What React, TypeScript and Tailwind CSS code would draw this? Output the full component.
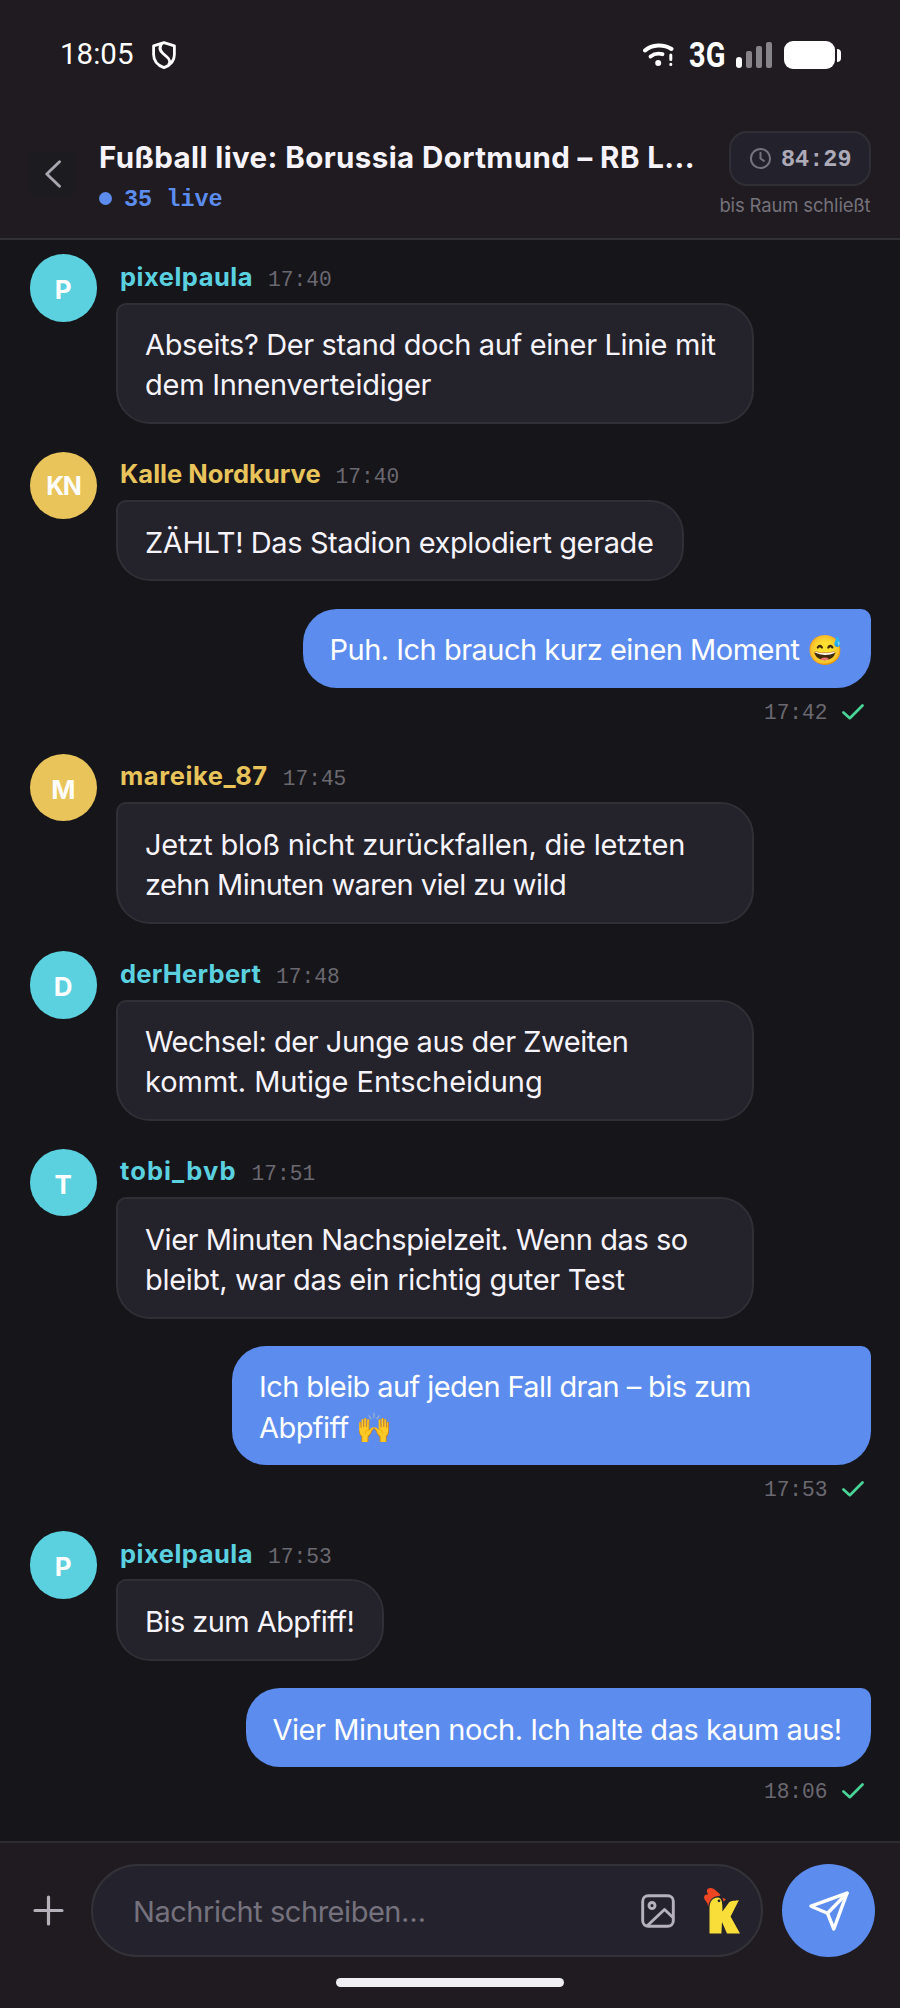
import { clsx } from 'clsx';

type Line = { text: string; tracking: string };

type Message = {
  id: number;
  author?: string;
  authorTracking?: string;
  initials?: string;
  tone?: 'cyan' | 'gold';
  time: string;
  lines: Line[];
  width: string;
};

const MESSAGES: Message[] = [
  {
    id: 1,
    author: 'pixelpaula',
    authorTracking: 'tracking-[0.5px]',
    initials: 'P',
    tone: 'cyan',
    time: '17:40',
    lines: [
      { text: 'Abseits? Der stand doch auf einer Linie mit', tracking: 'tracking-[-0.37px]' },
      { text: 'dem Innenverteidiger', tracking: 'tracking-[-0.26px]' },
    ],
    width: 'w-[637.5px]',
  },
  {
    id: 2,
    author: 'Kalle Nordkurve',
    authorTracking: 'tracking-normal',
    initials: 'KN',
    tone: 'gold',
    time: '17:40',
    lines: [{ text: 'ZÄHLT! Das Stadion explodiert gerade', tracking: 'tracking-[-0.4px]' }],
    width: 'w-[567.5px]',
  },
  {
    id: 3,
    time: '17:42',
    lines: [{ text: 'Puh. Ich brauch kurz einen Moment 😅', tracking: 'tracking-[-0.51px]' }],
    width: 'w-[568px]',
  },
  {
    id: 4,
    author: 'mareike_87',
    authorTracking: 'tracking-[0.6px]',
    initials: 'M',
    tone: 'gold',
    time: '17:45',
    lines: [
      { text: 'Jetzt bloß nicht zurückfallen, die letzten', tracking: 'tracking-[-0.18px]' },
      { text: 'zehn Minuten waren viel zu wild', tracking: 'tracking-[-0.57px]' },
    ],
    width: 'w-[637.5px]',
  },
  {
    id: 5,
    author: 'derHerbert',
    authorTracking: 'tracking-[0.25px]',
    initials: 'D',
    tone: 'cyan',
    time: '17:48',
    lines: [
      { text: 'Wechsel: der Junge aus der Zweiten', tracking: 'tracking-[-0.49px]' },
      { text: 'kommt. Mutige Entscheidung', tracking: 'tracking-[-0.04px]' },
    ],
    width: 'w-[637.5px]',
  },
  {
    id: 6,
    author: 'tobi_bvb',
    authorTracking: 'tracking-[1.1px]',
    initials: 'T',
    tone: 'cyan',
    time: '17:51',
    lines: [
      { text: 'Vier Minuten Nachspielzeit. Wenn das so', tracking: 'tracking-[-0.44px]' },
      { text: 'bleibt, war das ein richtig guter Test', tracking: 'tracking-[-0.3px]' },
    ],
    width: 'w-[637.5px]',
  },
  {
    id: 7,
    time: '17:53',
    lines: [
      { text: 'Ich bleib auf jeden Fall dran – bis zum', tracking: 'tracking-[-0.6px]' },
      { text: 'Abpfiff 🙌', tracking: 'tracking-[-0.55px]' },
    ],
    width: 'w-[638.5px]',
  },
  {
    id: 8,
    author: 'pixelpaula',
    authorTracking: 'tracking-[0.5px]',
    initials: 'P',
    tone: 'cyan',
    time: '17:53',
    lines: [{ text: 'Bis zum Abpfiff!', tracking: 'tracking-[-0.56px]' }],
    width: 'w-[268px]',
  },
  {
    id: 9,
    time: '18:06',
    lines: [{ text: 'Vier Minuten noch. Ich halte das kaum aus!', tracking: 'tracking-[-0.47px]' }],
    width: 'w-[625px]',
  },
];

function StatusBar() {
  return (
    <div className="flex h-[110px] items-center pl-[60px] pr-[59px] text-white">
      <span className="font-['Roboto',sans-serif] text-[29.5px] leading-none">18:05</span>
      <svg viewBox="0 0 24 28" className="ml-[19px] h-[28px] w-[24px]" fill="none" stroke="currentColor" strokeWidth="2.8" strokeLinejoin="round">
        <path d="M12 1.6 L22.4 4.8 V13.5 C22.4 20 18 24.5 12 26.6 C6 24.5 1.6 20 1.6 13.5 V4.8 Z" />
        <path d="M10 2.4 C7 6 7.5 9.5 11 12.5 L15 16 C18 18.6 18.5 20.5 16.6 23.8" />
      </svg>
      <div className="ml-auto flex items-center">
        <svg viewBox="0 0 31 24" className="h-[24px] w-[31px]" fill="none" stroke="currentColor" strokeLinecap="round">
          <path d="M2 7.5 C9 1 21 1 28.5 6" strokeWidth="4" />
          <path d="M7.5 13.5 C11 10.8 15 10 19.5 11.2" strokeWidth="3.8" />
          <circle cx="15.2" cy="20" r="3" fill="currentColor" stroke="none" />
          <path d="M27.8 12 V16.5 M27.8 21.2 V21.4" strokeWidth="3" />
        </svg>
        <span className="ml-[15px] inline-block w-[38px] origin-left scale-x-[0.84] font-['Roboto',sans-serif] text-[34.5px] font-bold leading-none">
          3G
        </span>
        <div className="ml-[9px] flex h-[26px] items-end gap-[4px]">
          <i className="h-[11px] w-[6px] rounded-full bg-white" />
          <i className="h-[17px] w-[6px] rounded-[2px] bg-[#868488]" />
          <i className="h-[22px] w-[6px] rounded-[2px] bg-[#868488]" />
          <i className="h-[26px] w-[6px] rounded-[2px] bg-[#868488]" />
        </div>
        <span className="ml-[12px] h-[28px] w-[51px] rounded-[9px] bg-white" />
        <span className="ml-[2px] h-[13px] w-[4px] rounded-r-[4px] bg-white" />
      </div>
    </div>
  );
}

function Header() {
  return (
    <header className="h-[240px] border-b-2 border-[#303035] bg-[#1f1b20]">
      <StatusBar />
      <div className="flex pl-[29px] pr-[29.5px]">
        <div className="mt-[41px] flex h-[46px] w-[46px] items-center justify-center rounded-[10px] bg-[#1c1b20]">
          <svg viewBox="0 0 16 28" className="ml-[1.5px] h-[28px] w-[16px]" fill="none" stroke="#a9a6af" strokeWidth="2.9" strokeLinecap="round" strokeLinejoin="round">
            <path d="M14.5 1.8 L1.8 14 L14.5 26.2" />
          </svg>
        </div>
        <div className="ml-[24px] mt-[27px] w-[600px]">
          <h1 className="h-[40px] whitespace-nowrap text-[29.5px] font-bold leading-[40px] tracking-[0.4px] text-[#f6f4fa]">
            Fußball live: Borussia Dortmund – RB L...
          </h1>
          <div className="mt-[6px] flex h-[30px] items-center">
            <span className="h-[13px] w-[13px] rounded-full bg-[#5b8cee]" />
            <span className="ml-[12px] pt-[4px] font-['Liberation_Mono',monospace] text-[23.5px] font-bold leading-[30px] text-[#5b8cee]">
              35 live
            </span>
          </div>
        </div>
        <div className="ml-auto flex flex-col items-end">
          <div className="mt-[21px] flex h-[55px] w-[142px] items-center rounded-[18px] border-2 border-[#302f36] bg-[#23222c] pl-[18px]">
            <svg viewBox="0 0 24 24" className="h-[23px] w-[23px]" fill="none" stroke="#75727d" strokeWidth="2.1" strokeLinecap="round" strokeLinejoin="round">
              <circle cx="12" cy="12" r="10" />
              <path d="M12 6 V12 L15.5 14.5" />
            </svg>
            <span className="ml-[9.5px] pt-[3px] font-['Liberation_Mono',monospace] text-[23.5px] font-bold text-[#aeabb8]">
              84:29
            </span>
          </div>
          <p className="mt-[6px] whitespace-nowrap text-[18.5px] leading-[26px] tracking-[-0.16px] text-[#75727b]">
            bis Raum schließt
          </p>
        </div>
      </div>
    </header>
  );
}

function Bubble({ message }: { message: Message }) {
  const own = !message.author;
  return (
    <div
      className={clsx(
        'whitespace-nowrap text-[29px] leading-[40.1px]',
        message.width,
        own
          ? 'rounded-[34px] rounded-tr-[10px] bg-[#5b8cee] px-[27px] pb-[17.1px] pt-[21.1px] text-white'
          : 'rounded-[34px] rounded-tl-[10px] border-2 border-[#302f36] bg-[#24222b] px-[27px] pb-[16.6px] pt-[20.6px] text-[#f6f4fa]',
      )}
    >
      {message.lines.map((line) => (
        <p key={line.text} className={clsx('h-[40.1px]', line.tracking)}>
          {line.text}
        </p>
      ))}
    </div>
  );
}

function IncomingMessage({ message }: { message: Message }) {
  return (
    <div className="flex">
      <div
        className={clsx(
          'flex h-[67.5px] w-[67.5px] shrink-0 items-center justify-center rounded-full pt-[3px] font-bold text-white',
          message.initials === 'KN' ? 'text-[25px] tracking-[-1.6px]' : 'text-[26px]',
          message.tone === 'cyan' ? 'bg-[#5bd1e0]' : 'bg-[#e8c45b]',
        )}
      >
        {message.initials}
      </div>
      <div className="ml-[19px]">
        <div className="flex h-[48.3px] items-baseline pl-[4px] pt-[4.5px]">
          <span
            className={clsx(
              'text-[25.5px] font-bold leading-[36px]',
              message.authorTracking,
              message.tone === 'cyan' ? 'text-[#5bd1e0]' : 'text-[#e8c45b]',
            )}
          >
            {message.author}
          </span>
          <span className="ml-[15px] font-['Liberation_Mono',monospace] text-[21.2px] text-[#6b6970]">
            {message.time}
          </span>
        </div>
        <Bubble message={message} />
      </div>
    </div>
  );
}

function OwnMessage({ message }: { message: Message }) {
  return (
    <div className="flex flex-col items-end">
      <Bubble message={message} />
      <div className="flex h-[38.6px] items-center pr-[7px] pt-[10.5px]">
        <span className="pt-[4px] font-['Liberation_Mono',monospace] text-[21.2px] text-[#6b6970]">{message.time}</span>
        <svg viewBox="0 0 22 16" className="ml-[14px] h-[16px] w-[22px]" fill="none" stroke="#48d597" strokeWidth="2.7" strokeLinecap="round" strokeLinejoin="round">
          <path d="M1.5 8.5 L7.8 14.2 L20.5 1.5" />
        </svg>
      </div>
    </div>
  );
}

function RoosterIcon() {
  return (
    <svg viewBox="0 0 38 48" className="h-[48px] w-[38px]">
      <path
        d="M5.2 19.5 C4.8 17.5 4.2 15.8 2.6 13.8 C0.6 11.5 0.4 8.6 3.2 7.6 C4 7.4 4.6 7.4 5.2 7.2 C2.8 4.2 4 1.4 7 1 C9.2 0.8 11 1.6 13.4 4 C15.4 5.6 17 7 17.4 8.8 C10.5 8.8 6.4 12.8 5.2 19.5 Z"
        fill="#ee4623"
      />
      <path d="M19.6 10.4 L23 12.4 L20.4 14.6 Z" fill="#ee4623" />
      <path
        d="M6.5 46.5 V21 C6.5 13.6 10.6 10.2 14.8 10.4 C18.6 10.8 19.6 14.2 19.4 24.5 L26 15.6 C28.4 12.8 32.4 14.4 36 13 L27.6 29.5 L37 46.5 H24 L19 35 L18.4 46.5 Z"
        fill="#f9de3a"
      />
      <circle cx="16" cy="13.8" r="1.4" fill="#24222b" />
    </svg>
  );
}

function Composer() {
  return (
    <footer className="h-[167px] border-t-[2.5px] border-[#2c2b30] bg-[#1f1b20]">
      <div className="flex items-center pl-[33px] pt-[21px]">
        <svg viewBox="0 0 31 31" className="h-[31px] w-[31px]" stroke="#b5b1bb" strokeWidth="3.2" strokeLinecap="round">
          <path d="M15.5 2 V29 M2 15.5 H29" />
        </svg>
        <div className="ml-[27px] flex h-[92.5px] w-[672px] items-center rounded-full border-2 border-[#333238] bg-[#24232d] pl-[40px]">
          <span className="pt-[3px] text-[29px] tracking-[-0.46px] text-[#75727d]">Nachricht schreiben…</span>
          <svg viewBox="0 0 34 34" className="ml-auto h-[34px] w-[34px]" fill="none" stroke="#b5b1bd" strokeWidth="2.9" strokeLinecap="round" strokeLinejoin="round">
            <rect x="1.7" y="1.7" width="30.6" height="30.6" rx="5.5" />
            <circle cx="11" cy="11.5" r="3" />
            <path d="M6.5 31.5 L23.5 15.5 L32 23.5" />
          </svg>
          <div className="ml-[28px] mr-[20px]">
            <RoosterIcon />
          </div>
        </div>
        <div className="ml-[19px] flex h-[93px] w-[93px] items-center justify-center rounded-full bg-[#5b8cee]">
          <svg viewBox="0 0 40 40" className="h-[40px] w-[40px]" fill="none" stroke="white" strokeWidth="3.4" strokeLinecap="round" strokeLinejoin="round">
            <path d="M38 2.2 L2 15.2 L18.5 22.2 L24.8 38 Z" />
            <path d="M38 2.2 L18.5 22.2" />
          </svg>
        </div>
      </div>
      <div className="mx-auto mt-[20.5px] h-[9px] w-[228px] rounded-full bg-[#efeef0]" />
    </footer>
  );
}

export default function App() {
  return (
    <div className="flex h-[2008px] w-[900px] flex-col overflow-hidden bg-[#16151a] font-['Inter','Noto_Color_Emoji',sans-serif]">
      <Header />
      <main className="flex flex-1 flex-col gap-[27.8px] pl-[29.5px] pr-[29.5px] pt-[14.4px]">
        {MESSAGES.map((message) =>
          message.author ? (
            <IncomingMessage key={message.id} message={message} />
          ) : (
            <OwnMessage key={message.id} message={message} />
          ),
        )}
      </main>
      <Composer />
    </div>
  );
}
